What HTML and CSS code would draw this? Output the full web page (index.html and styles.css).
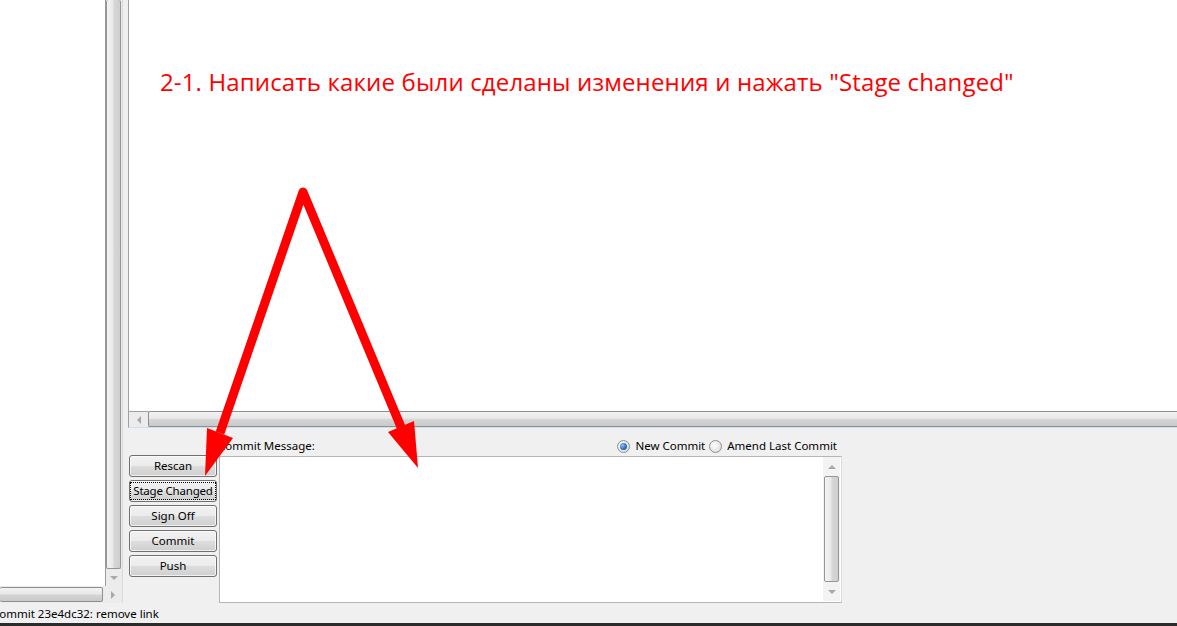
FILE: index.html
```html
<!DOCTYPE html>
<html>
<head>
<meta charset="utf-8">
<title>Git Gui</title>
<link rel="stylesheet" href="styles.css">
</head>
<body>
<div class="app">
  <div class="main">
    <div class="left">
      <div class="left-top">
        <div class="left-content"></div>
        <div class="vscroll left-vscroll">
          <div class="vthumb left-vthumb"></div>
          <div class="arrow-v"><span class="tri-down"></span></div>
        </div>
      </div>
      <div class="hscroll left-hscroll">
        <div class="hthumb left-hthumb"></div>
        <div class="arrow-h"><span class="tri-right"></span></div>
      </div>
    </div>
    <div class="sash"></div>
    <div class="right">
      <div class="diff">
        <p class="note">2-1. Написать какие были сделаны изменения и нажать "Stage changed"</p>
      </div>
      <div class="hscroll diff-hscroll">
        <div class="arrow-h"><span class="tri-left"></span></div>
        <div class="hthumb diff-hthumb"></div>
      </div>
      <div class="commit-area">
        <div class="commit-head">
          <span class="label">Commit Message:</span>
          <span class="radios">
            <span class="radio"><span class="radio-dot on"></span>New Commit</span>
            <span class="radio"><span class="radio-dot"></span>Amend Last Commit</span>
          </span>
        </div>
        <div class="commit-body">
          <div class="buttons">
            <div class="btn">Rescan</div>
            <div class="btn focus"><span class="focus-ring">Stage Changed</span></div>
            <div class="btn">Sign Off</div>
            <div class="btn">Commit</div>
            <div class="btn">Push</div>
          </div>
          <div class="msg">
            <div class="msg-text"></div>
            <div class="vscroll msg-vscroll">
              <div class="arrow-v"><span class="tri-up"></span></div>
              <div class="vthumb msg-vthumb"></div>
              <div class="arrow-v"><span class="tri-down"></span></div>
            </div>
          </div>
        </div>
      </div>
    </div>
  </div>
  <div class="status"><span class="status-text">Commit 23e4dc32: remove link</span></div>
  <div class="bottom-edge"></div>
  <svg class="arrows" width="1177" height="626" viewBox="0 0 1177 626">
    <polyline points="220,433 303,192 401,427" fill="none" stroke="#ff0000" stroke-width="9" stroke-linejoin="round"/>
    <polygon points="205,476 207,428 233,438" fill="#ff0000"/>
    <polygon points="418,468 388,432 414,421" fill="#ff0000"/>
  </svg>
</div>
</body>
</html>
```

FILE: styles.css
```css
* { box-sizing: border-box; }

body {
  margin: 0;
  font-family: "Noto Sans", "Open Sans", sans-serif;
  font-size: 11.5px;
  color: #000;
  background: #f0f0f0;
}

.app {
  position: relative;
  width: 1177px;
  height: 626px;
  overflow: hidden;
  display: flex;
  flex-direction: column;
}

.main {
  display: flex;
  height: 603px;
}

/* ---------- left pane ---------- */
.left {
  width: 123px;
  display: flex;
  flex-direction: column;
  border-right: 1px solid #d9d9d9;
}

.left-top {
  flex: 1;
  display: flex;
  min-height: 0;
}

.left-content {
  flex: 1;
  background: #fff;
}

.vscroll {
  width: 17px;
  display: flex;
  flex-direction: column;
  background: #ececec;
}

.left-vscroll {
  border-left: 1px solid #9a9a9a;
}

.vthumb {
  border: 1px solid #959595;
  border-radius: 2px;
  background: linear-gradient(to right, #f4f4f4 0%, #e9e9e9 45%, #d6d6d6 55%, #cfcfcf 100%);
}

.left-vthumb {
  flex: 1;
  width: 15px;
  border-top: none;
}

.arrow-v {
  height: 17px;
  display: flex;
  align-items: center;
  justify-content: center;
}

.hscroll {
  height: 17px;
  display: flex;
  background: #ececec;
}

.arrow-h {
  width: 18px;
  display: flex;
  align-items: center;
  justify-content: center;
}

.hthumb {
  border: 1px solid #8f8f8f;
  border-radius: 2px;
  background: linear-gradient(to bottom, #f3f3f3 0%, #e8e8e8 45%, #d4d4d4 55%, #c9c9c9 100%);
}

.left-hscroll {
  padding: 1px 0 1px 0;
}

.left-hthumb {
  width: 103px;
  border-left: none;
}

.left-hscroll .arrow-h {
  flex: 1;
}

.tri-down, .tri-up, .tri-left, .tri-right {
  width: 0;
  height: 0;
  display: block;
}

.tri-down {
  border-left: 4px solid transparent;
  border-right: 4px solid transparent;
  border-top: 4px solid #a8a8a8;
}

.tri-up {
  border-left: 4px solid transparent;
  border-right: 4px solid transparent;
  border-bottom: 4px solid #a8a8a8;
}

.tri-left {
  border-top: 4px solid transparent;
  border-bottom: 4px solid transparent;
  border-right: 4px solid #a8a8a8;
}

.tri-right {
  border-top: 4px solid transparent;
  border-bottom: 4px solid transparent;
  border-left: 4px solid #a8a8a8;
}

/* ---------- sash ---------- */
.sash {
  width: 5px;
  background: #f0f0f0;
}

/* ---------- right pane ---------- */
.right {
  flex: 1;
  display: flex;
  flex-direction: column;
  min-width: 0;
}

.diff {
  height: 411px;
  background: #fff;
  border-left: 1px solid #a0a0a0;
  padding: 66px 0 0 31px;
}

.note {
  margin: 0;
  font-family: "Open Sans", "Noto Sans", sans-serif;
  font-size: 24px;
  letter-spacing: 0.15px;
  line-height: 32px;
  color: #ff0000;
  white-space: nowrap;
}

.diff-hscroll {
  height: 16px;
  border-left: 1px solid #a0a0a0;
  border-bottom: 1px solid #c9e2ef;
  box-sizing: content-box;
}

.diff-hscroll .arrow-h {
  width: 19px;
  border-top: 1px solid #a0a0a0;
}

.diff-hthumb {
  flex: 1;
  border-right: none;
  border-radius: 2px 0 0 2px;
}

/* ---------- commit area ---------- */
.commit-area {
  flex: 1;
  display: flex;
  flex-direction: column;
  background: #f0f0f0;
}

.commit-head {
  width: 712px;
  height: 28px;
  display: flex;
  align-items: center;
  padding: 8px 3px 0 90px;
}

.label {
  flex: 1;
  line-height: 16px;
}

.radios {
  display: flex;
  align-items: center;
  gap: 4px;
}

.radio {
  display: flex;
  align-items: center;
  line-height: 16px;
}

.radio-dot {
  width: 13px;
  height: 13px;
  margin-right: 5px;
  border-radius: 50%;
  border: 1px solid #8e8f8f;
  background: radial-gradient(circle at 40% 40%, #ffffff 0%, #e6e6e6 60%, #d0d0d0 100%);
  display: flex;
  align-items: center;
  justify-content: center;
}

.radio-dot.on::after {
  content: "";
  width: 7px;
  height: 7px;
  border-radius: 50%;
  background: radial-gradient(circle at 35% 35%, #8fc1f0 0%, #2c6fc0 55%, #1a4f93 100%);
}

.commit-body {
  flex: 1;
  display: flex;
  gap: 2px;
  padding-left: 1px;
}

.buttons {
  width: 88px;
  display: flex;
  flex-direction: column;
  gap: 3px;
  margin-top: -1px;
}

.btn {
  height: 22px;
  border: 1px solid #707070;
  border-radius: 3px;
  background: linear-gradient(to bottom, #f2f2f2 0%, #ebebeb 50%, #dddddd 51%, #cfcfcf 100%);
  display: flex;
  align-items: center;
  justify-content: center;
  line-height: 16px;
  white-space: nowrap;
  box-shadow: inset 0 0 0 1px rgba(255, 255, 255, 0.7);
}

.focus-ring {
  padding: 0 1px;
  outline: 1px dotted #000;
  outline-offset: 1px;
  line-height: 14px;
  letter-spacing: -0.2px;
}

.msg {
  width: 623px;
  display: flex;
  background: #fff;
  border: 1px solid #b5b5b5;
  border-right-color: #dcdcdc;
}

.msg-text {
  flex: 1;
}

.msg-vscroll {
  background: #f3f3f3;
  padding: 0 1px;
  margin: 0 1px 1px 0;
}

.msg-vscroll .arrow-v {
  height: 19px;
}

.msg-vthumb {
  flex: 1;
}

/* ---------- status bar ---------- */
.status {
  height: 20px;
  line-height: 20px;
  background: #f0f0f0;
  white-space: nowrap;
  overflow: hidden;
  padding-top: 1px;
}

.status-text {
  margin-left: -8px;
}

.bottom-edge {
  height: 3px;
  background: #2b2b2b;
}

.arrows {
  position: absolute;
  top: 0;
  left: 0;
  pointer-events: none;
}
```
